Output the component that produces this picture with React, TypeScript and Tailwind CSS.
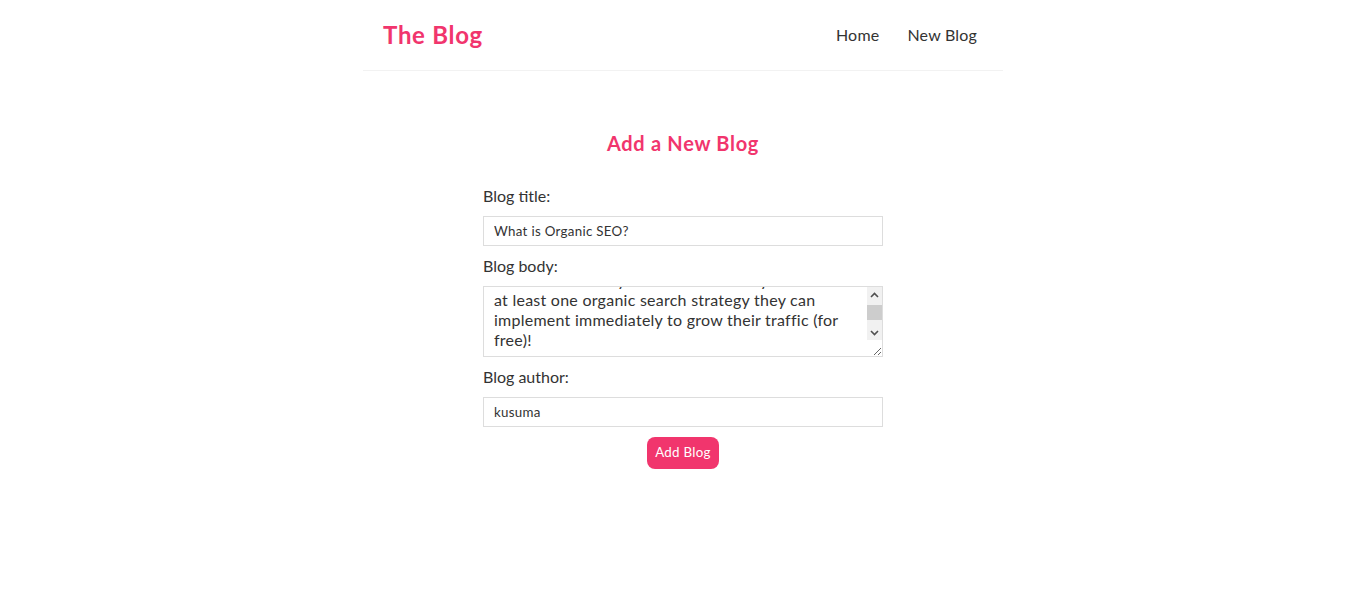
import { useEffect, useRef } from 'react';

const bodyText =
  'Organic SEO is the practice of earning traffic from search engines without paying for ads. In this post we walk through keywords, on-page content and links so that every reader comes away with\nat least one organic search strategy they can implement immediately to grow their traffic (for free)!\n\nWe will start with keyword research, then look at how to write content that answers the questions people are actually searching for, and finally cover simple ways to earn links from other sites.';

function Chevron({ up }: { up?: boolean }) {
  return (
    <svg width="9" height="6" viewBox="0 0 9 6" className="block">
      <polyline
        points={up ? '1,5 4.5,1.5 8,5' : '1,1 4.5,4.5 8,1'}
        fill="none"
        stroke="#505050"
        strokeWidth="1.6"
      />
    </svg>
  );
}

function Navbar() {
  return (
    <nav className="mx-auto flex max-w-[640px] items-center border-b border-[#f2f2f2] p-5">
      <h1 className="text-[24px] font-bold leading-[30px] tracking-[0.7px] text-[#f1356d]">The Blog</h1>
      <div className="ml-auto flex">
        <a href="/" className="ml-4 px-1.5 text-[16px] leading-[18px] tracking-[0.2px] text-[#333]">
          Home
        </a>
        <a href="/create" className="ml-4 px-1.5 text-[16px] leading-[18px] tracking-[0.2px] text-[#333]">
          New Blog
        </a>
      </div>
    </nav>
  );
}

function Create() {
  const bodyRef = useRef<HTMLTextAreaElement>(null);

  useEffect(() => {
    // count the wrapped lines before "at least", then scroll so it sits near the top
    const el = bodyRef.current;
    if (!el) return;
    const cs = getComputedStyle(el);
    const probe = document.createElement('div');
    probe.style.cssText = `position:absolute;visibility:hidden;white-space:pre-wrap;word-wrap:break-word;font:${cs.font};letter-spacing:${cs.letterSpacing};line-height:20px;width:${el.clientWidth - 35}px`;
    probe.textContent = bodyText.slice(0, bodyText.indexOf('\nat least'));
    document.body.appendChild(probe);
    const lines = Math.round(probe.offsetHeight / 20);
    document.body.removeChild(probe);
    el.scrollTop = 20 * lines + 3;
  }, []);

  return (
    <div className="mx-auto max-w-[400px] text-center">
      <h2 className="mb-[30px] text-[20px] font-bold leading-[25px] tracking-[0.7px] text-[#f1356d]">
        Add a New Blog
      </h2>
      <form onSubmit={(e) => e.preventDefault()}>
        <label className="block text-left text-[16px] leading-5 text-[#333]">Blog title:</label>
        <input
          type="text"
          defaultValue="What is Organic SEO?"
          className="my-2.5 block h-[30px] w-full border border-[#ddd] px-2.5 py-1.5 text-[13.33px] tracking-[0.3px] text-[#333] outline-none"
        />
        <label className="block text-left text-[16px] leading-5 text-[#333]">Blog body:</label>
        <div className="relative my-2.5">
          <textarea
            ref={bodyRef}
            defaultValue={bodyText}
            spellCheck={false}
            className="block h-[71px] w-full overflow-hidden border border-[#ddd] py-1.5 pr-[25px] pl-2.5 text-[16px] leading-5 tracking-[0.25px] text-[#333] outline-none"
          />
          {/* scrollbar */}
          <div className="pointer-events-none absolute top-px right-px flex h-[53px] w-[15px] flex-col bg-[#f1f1f1]">
            <div className="flex h-[15px] items-center justify-center">
              <Chevron up />
            </div>
            <div className="flex-1 pt-[3px]">
              <div className="h-[15px] bg-[#cdcdcd]" />
            </div>
            <div className="flex h-[15px] items-center justify-center">
              <Chevron />
            </div>
          </div>
        </div>
        <label className="block text-left text-[16px] leading-5 text-[#333]">Blog author:</label>
        <input
          type="text"
          defaultValue="kusuma"
          className="my-2.5 block h-[30px] w-full border border-[#ddd] px-2.5 py-1.5 text-[13.33px] tracking-[0.3px] text-[#333] outline-none"
        />
        <button className="h-[32px] cursor-pointer rounded-lg bg-[#f1356d] px-2 text-[13.33px] tracking-[0.3px] text-white">
          Add Blog
        </button>
      </form>
    </div>
  );
}

export default function App() {
  return (
    <div className="min-h-screen bg-white font-['Lato',sans-serif] text-[#333]">
      <Navbar />
      <div className="mx-auto my-10 max-w-[640px] p-5">
        <Create />
      </div>
    </div>
  );
}
